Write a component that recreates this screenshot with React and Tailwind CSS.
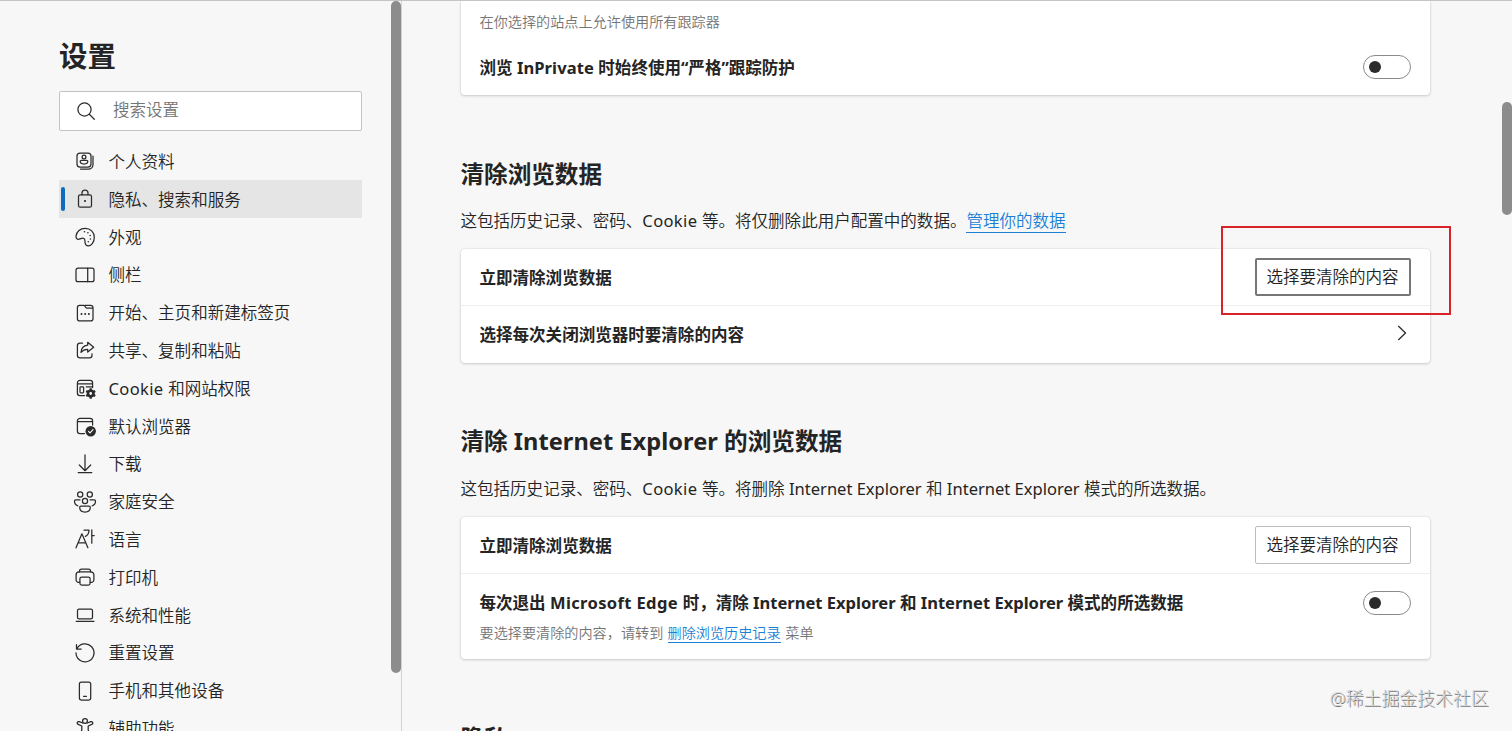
import React from "react";

const Icon = ({ children }) => (
  <svg
    className="size-5 shrink-0 overflow-visible"
    viewBox="0 0 20 20"
    fill="none"
    stroke="#2b2b2b"
    strokeWidth="1.25"
    strokeLinecap="round"
    strokeLinejoin="round"
  >
    {children}
  </svg>
);

const Dot = ({ x, y, r = 0.8 }) => <circle cx={x} cy={y} r={r} fill="#2b2b2b" stroke="none" />;

const gearTeeth = [0, 60, 120];

const items = [
  {
    label: "个人资料",
    icon: (
      <>
        <rect x="2" y="2" width="14" height="14" rx="3" />
        <circle cx="9" cy="5.9" r="1.9" />
        <path d="M6.4 9.4h5.2a1.2 1.2 0 0 1 1.2 1.2c0 1.600-1.500 2.400-3.800 2.400s-3.800-.8-3.800-2.400a1.200 1.200 0 0 1 1.200-1.200z" />
        <path d="M18 5v8.500a4.700 4.700 0 0 1-4.700 4.700H5.500" />
      </>
    ),
  },
  {
    label: "隐私、搜索和服务",
    active: true,
    icon: (
      <>
        <rect x="3.500" y="5.800" width="13" height="12.400" rx="1.800" />
        <path d="M7 5.800V4a3 3 0 0 1 6 0v1.800" />
        <Dot x={10} y={12} r={1.1} />
      </>
    ),
  },
  {
    label: "外观",
    icon: (
      <>
        <path d="M1 9.200C1.500 4.500 5.300 1.300 10.200 1.300c5.200 0 9.100 4 9.100 9 0 4.900-2.800 8.600-6 8.600-2 0-3-1.200-3.200-3.100l-.2-2.300c-.2-1.900-1.500-2.700-3.100-2.200l-2.800.9C2.200 12.700.8 11.200 1 9.200z" />
        <Dot x={9.500} y={4.800} />
        <Dot x={12.900} y={5.800} />
        <Dot x={15.200} y={8.500} />
        <Dot x={15.400} y={12} />
        <Dot x={13.300} y={14.800} />
      </>
    ),
  },
  {
    label: "侧栏",
    icon: (
      <>
        <rect x="1" y="3.200" width="18" height="13.500" rx="2" />
        <path d="M12.700 3.200v13.500" />
      </>
    ),
  },
  {
    label: "开始、主页和新建标签页",
    icon: (
      <>
        <path d="M2.400 15.700V4.600a2.200 2.200 0 0 1 2.200-2.200h4.200c1.600 0 1.300 2.600 3 2.600h6.300M10 2.400h5.800A2.200 2.200 0 0 1 18 4.600v11.100a2.200 2.200 0 0 1-2.200 2.200H4.600a2.200 2.200 0 0 1-2.200-2.200" />
        <Dot x={6.500} y={11} r={1} />
        <Dot x={10.200} y={11} r={1} />
        <Dot x={13.900} y={11} r={1} />
      </>
    ),
  },
  {
    label: "共享、复制和粘贴",
    icon: (
      <>
        <path d="M7.500 3.200H5A2.600 2.600 0 0 0 2.400 5.800v9.400A2.600 2.600 0 0 0 5 17.800h9.400a2.600 2.600 0 0 0 2.600-2.600v-1.400" />
        <path d="M12.700 2.300l6 5-6 4.800V9.300c-3-.1-5 .9-6.700 3.100.3-4.300 2.700-6.800 6.700-7.200z" />
      </>
    ),
  },
  {
    label: (
      <>
        <span className="font-normal tracking-[0.35px]">Cookie </span>和网站权限
      </>
    ),
    icon: (
      <>
        <path d="M9.500 17.500H5a2.600 2.600 0 0 1-2.600-2.600V5A2.600 2.600 0 0 1 5 2.400h10A2.600 2.600 0 0 1 17.600 5v4.500M2.400 5.900h15.200M11.300 8.800h6.300" />
        <rect x="5" y="8.800" width="3.600" height="6" rx=".8" />
        <circle cx="15.700" cy="15.500" r="2.700" strokeWidth="2.600" />
        {gearTeeth.map((a) => (
          <g key={a} transform={`rotate(${a} 15.7 15.500)`}>
            <path d="M15.700 10.300v2M15.700 18.700v2" strokeWidth="2.300" strokeLinecap="butt" />
          </g>
        ))}
      </>
    ),
  },
  {
    label: "默认浏览器",
    icon: (
      <>
        <path d="M9.500 17.500H5a2.600 2.600 0 0 1-2.600-2.600V5A2.600 2.600 0 0 1 5 2.400h10A2.600 2.600 0 0 1 17.600 5v4M2.400 5.700h15.200" />
        <circle cx="15.700" cy="15.200" r="5.200" fill="#2b2b2b" stroke="none" />
        <path d="M13.500 15.400l1.500 1.500 3-3.200" stroke="#fff" strokeWidth="1.100" />
      </>
    ),
  },
  { label: "下载", icon: <path d="M10 .8v15.800M4.300 11l5.700 5.700 5.700-5.700M3.200 18.600h13.600" /> },
  {
    label: "家庭安全",
    icon: (
      <>
        <circle cx="5.200" cy="2.500" r="2.600" />
        <circle cx="14.800" cy="2.500" r="2.600" />
        <circle cx="10" cy="9" r="2.600" />
        <path d="M6 14h8a1.300 1.300 0 0 1 1.300 1.300c0 2.900-2.100 4.700-5.300 4.700s-5.300-1.800-5.300-4.700A1.300 1.300 0 0 1 6 14z" />
        <path d="M5 7.800H.7A1.200 1.200 0 0 0-.5 9c0 2.300 1.100 4.100 3.300 4.800M15 7.800h4.300A1.200 1.200 0 0 1 20.500 9c0 2.300-1.100 4.100-3.300 4.800" />
      </>
    ),
  },
  {
    label: "语言",
    icon: (
      <path d="M1 18.800L6.900 4.800l6 14M3.200 13.800h7.500M9 1.200h5c0 3-1.300 5-3.600 6.200M16.800.8v13.400M16.800 6.500h2.400" />
    ),
  },
  {
    label: "打印机",
    icon: (
      <>
        <path d="M4.800 15.300H3.600a2.500 2.500 0 0 1-2.500-2.500V7.900a3 3 0 0 1 3-3h11.800a3 3 0 0 1 3 3v4.900a2.500 2.500 0 0 1-2.500 2.500h-1.200" />
        <path d="M4.500 4.900V4a2 2 0 0 1 2-2h7a2 2 0 0 1 2 2v.9" />
        <rect x="4.900" y="10" width="10.200" height="8" rx="1.800" />
      </>
    ),
  },
  {
    label: "系统和性能",
    icon: (
      <>
        <rect x="2.500" y="4.200" width="15" height="9.600" rx="1.600" />
        <path d="M1.200 16.300h17.800" />
      </>
    ),
  },
  {
    label: "重置设置",
    icon: <path d="M1.500 1.500v4.600h4.700M1.900 5.900A9 9 0 1 1 1 9.800" />,
  },
  {
    label: "手机和其他设备",
    icon: (
      <>
        <rect x="4.400" y="1" width="11.300" height="18" rx="1.900" />
        <path d="M8.600 15.400h2.800" />
      </>
    ),
  },
  {
    label: "辅助功能",
    icon: (
      <>
        <circle cx="10" cy="3" r="2.400" />
        <path d="M7.600 5L4.300 3.700c-2-.6-2.900 1.900-1.100 2.700l3.600 1.600v4l-2 5.600c-.6 1.900 1.700 2.500 2.400 1L10 13.500l2.800 5.100c.7 1.500 3 .9 2.400-1l-2-5.600V8l3.600-1.600c1.800-.8.900-3.300-1.100-2.700L12.400 5" />
      </>
    ),
  },
];

const Toggle = () => (
  <span className="flex h-6 w-12 items-center rounded-full border border-[#8a8a8a] bg-white pl-[5px]">
    <span className="size-3 rounded-full bg-[#2b2b2b]" />
  </span>
);

const Heading = ({ children }) => (
  <h2 className="h-8 whitespace-nowrap text-[23.6px] leading-8 font-bold">{children}</h2>
);

const Card = ({ className = "", children }) => (
  <section
    className={`rounded bg-white shadow-[0_1px_3px_rgba(0,0,0,0.16),0_0_2px_rgba(0,0,0,0.12)] ${className}`}
  >
    {children}
  </section>
);

export default function App() {
  return (
    <div className="relative flex h-[731px] w-[1512px] overflow-hidden border-t border-[#c4c4c4] bg-[#f7f7f7] font-['Noto_Sans','Noto_Sans_CJK_SC',sans-serif] text-[16.55px] font-[350] text-[#242424]">
      <aside className="flex w-[402px] shrink-0 justify-between border-r border-[#d2d2d2] pl-[59px]">
        <div className="w-[303px]">
          <h1 className="mt-[35px] h-10 text-[28.4px] leading-10 font-bold">设置</h1>
          <div className="mt-[15px] flex h-10 items-center rounded-[2px] border border-[#c2c2c2] bg-white pl-4">
            <Icon>
              <circle cx="8.500" cy="8.500" r="6.600" />
              <path d="M13.300 13.300l5 5" />
            </Icon>
            <span className="ml-[17px] pb-px text-[#757575]">搜索设置</span>
          </div>
          <nav className="mt-[11px]">
            {items.map((it, i) => (
              <div
                key={i}
                className={`flex h-[37.8px] items-center pt-px pl-[2px] ${it.active ? "bg-[#e5e5e5]" : ""}`}
              >
                <span className={`h-6 w-1 rounded-full ${it.active ? "bg-[#0f6cbd]" : ""}`} />
                <span className="ml-[10px] flex">
                  <Icon>{it.icon}</Icon>
                </span>
                <span className="ml-[13.500px] pt-[2px] whitespace-nowrap">{it.label}</span>
              </div>
            ))}
          </nav>
        </div>
        <div className="h-[672px] w-[10px] rounded-full bg-[#8c8c8c]" />
      </aside>

      <main className="w-[1028px] shrink-0 pl-[58.500px]">
        <Card className="h-[94px] rounded-t-none px-[19px]">
          <p className="h-[42px] text-[14.15px] leading-[41px] text-[#757575]">在你选择的站点上允许使用所有跟踪器</p>
          <div className="flex h-12 items-center justify-between font-bold">
            <span className="pt-[2px]">
              浏览 <span className="tracking-[0.1px]">InPrivate </span>时始终使用“严格”跟踪防护
            </span>
            <Toggle />
          </div>
        </Card>

        <div className="pt-[62.500px]">
          <Heading>清除浏览数据</Heading>
          <p className="mt-[17.500px] h-[28px] leading-[28px] whitespace-nowrap">
            这包括历史记录、密码、<span className="font-normal tracking-[0.35px]">Cookie </span>
            等。将仅删除此用户配置中的数据。
            <a className="border-b border-[#1b7fd6] text-[#1b7fd6]">管理你的数据</a>
          </p>
          <Card className="mt-[14px] h-[114px]">
            <div className="flex h-[57px] items-center justify-between border-b border-[#efefef] px-[19px] font-bold">
              <span className="pt-[2px]">立即清除浏览数据</span>
              <button className="h-[38px] w-[156px] rounded-[2px] border-2 border-[#767676] pr-px font-[350] whitespace-nowrap">
                选择要清除的内容
              </button>
            </div>
            <div className="flex h-[57px] items-center justify-between px-[19px] font-bold">
              <span className="pt-[2px]">选择每次关闭浏览器时要清除的内容</span>
              <svg className="mr-[3px] mb-[3px] h-4 w-3" viewBox="0 0 12 16" fill="none" stroke="#2b2b2b" strokeWidth="1.300">
                <path d="M2.300 1l7.200 7-7.200 7" />
              </svg>
            </div>
          </Card>
        </div>

        <div className="pt-[62px]">
          <Heading>
            清除 <span className="tracking-[0.040px]">Internet Explorer </span>的浏览数据
          </Heading>
          <p className="mt-[18px] h-[28px] leading-[28px] whitespace-nowrap">
            这包括历史记录、密码、<span className="font-normal tracking-[0.35px]">Cookie </span>等。将删除{" "}
            <span className="font-normal">Internet Explorer </span>和{" "}
            <span className="font-normal">Internet Explorer </span>模式的所选数据。
          </p>
          <Card className="mt-[14px] h-[142px]">
            <div className="flex h-[57px] items-center justify-between border-b border-[#efefef] px-[19px] font-bold">
              <span className="pt-[2px]">立即清除浏览数据</span>
              <button className="h-[38px] w-[156px] rounded-[2px] border border-[#bdbdbd] pr-px font-[350] whitespace-nowrap">
                选择要清除的内容
              </button>
            </div>
            <div className="flex justify-between px-[19px] pt-[17px]">
              <div className="whitespace-nowrap">
                <p className="h-6 leading-6 font-bold">
                  每次退出 <span className="tracking-[0.36px]">Microsoft Edge </span>时，清除 Internet Explorer 和
                  Internet Explorer 模式的所选数据
                </p>
                <p className="mt-[6px] h-6 text-[14.15px] leading-6 text-[#757575]">
                  要选择要清除的内容，请转到{" "}
                  <a className="ml-[0.500px] border-b border-[#1b7fd6] text-[#1b7fd6]">删除浏览历史记录</a>
                  <span className="ml-px"> 菜单</span>
                </p>
              </div>
              <Toggle />
            </div>
          </Card>
        </div>

        <div className="pt-[63px]">
          <Heading>隐私</Heading>
        </div>
      </main>

      <div className="ml-auto flex w-[10px] shrink-0 flex-col pt-[101px]">
        <div className="h-[113px] rounded-full bg-[#8c8c8c]" />
      </div>

      <div className="absolute top-[225px] left-[1221px] h-[89px] w-[230px] border-2 border-[#d8232a]" />
      <div className="absolute top-[684px] left-[1329.500px] text-[17.9px] leading-[26px] font-light whitespace-nowrap text-[#d8d8d8] [text-shadow:1px_1px_0_#767676]">
        @稀土掘金技术社区
      </div>
    </div>
  );
}
